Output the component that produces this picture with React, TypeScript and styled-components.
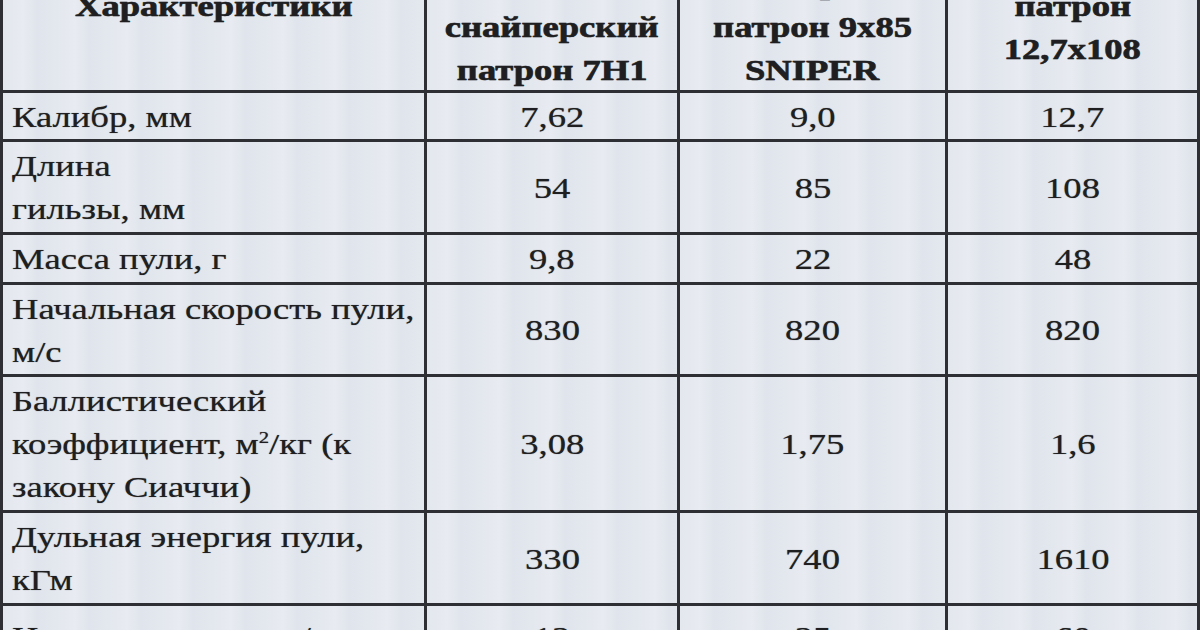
import React from 'react';
import styled, {createGlobalStyle} from "styled-components";

const GlobalStyle = createGlobalStyle`
  html, body {
    margin: 0;
    padding: 0;
    background: #e4e8ef;
    overflow: hidden;
  }
  body {
    width: 1200px;
    height: 630px;
    font-family: "Liberation Serif", "Times New Roman", serif;
    color: #1f1f22;
  }
`

type Row = {
    label: React.ReactNode[];
    values: string[];
}

const header: string[][] = [
    ["Характеристики"],
    ["Винтовочный", "отечественный", "снайперский", "патрон 7Н1"],
    ["Винтовочный", "снайперский", "патрон 9х85", "SNIPER"],
    ["Крупнокалиберный", "патрон", "12,7х108"],
];

const rows: Row[] = [
    {label: ["Калибр, мм"], values: ["7,62", "9,0", "12,7"]},
    {label: ["Длина", "гильзы, мм"], values: ["54", "85", "108"]},
    {label: ["Масса пули, г"], values: ["9,8", "22", "48"]},
    {label: ["Начальная скорость пули,", "м/с"], values: ["830", "820", "820"]},
    {
        label: ["Баллистический", <>коэффициент, м<sup>2</sup>/кг (к</>, "закону Сиаччи)"],
        values: ["3,08", "1,75", "1,6"]
    },
    {label: ["Дульная энергия пули,", "кГм"], values: ["330", "740", "1610"]},
    {label: ["Импульс отдачи, н/с"], values: ["12", "25", "60"]},
];

export default function App() {
    return (
        <>
            <GlobalStyle/>
            <Page>
                <Table>
                    {header.map((lines, i) => (
                        <HeadCell key={"h" + i}>
                            {lines.map((line, j) => (
                                <Line key={j} $origin="center">{line}</Line>
                            ))}
                        </HeadCell>
                    ))}
                    {rows.map((row, i) => (
                        <React.Fragment key={i}>
                            <LabelCell>
                                {row.label.map((line, j) => (
                                    <Line key={j} $origin="left">{line}</Line>
                                ))}
                            </LabelCell>
                            {row.values.map((v, j) => (
                                <ValueCell key={j}>
                                    <Line $origin="center">{v}</Line>
                                </ValueCell>
                            ))}
                        </React.Fragment>
                    ))}
                </Table>
            </Page>
        </>
    )
}

const Page = styled.div`
  width: 1200px;
  height: 630px;
  overflow: hidden;
`

// the scan is cut at the top, so the header row starts above the page
const Table = styled.div`
  margin-top: -83px;
  display: grid;
  grid-template-columns: 421px 250px 265px 249px;
  grid-template-rows: 170px 46px 90px 47px 89px 133px 90px 60px;
  gap: 3px;
  padding: 3px;
  width: 1200px;
  box-sizing: border-box;
  background: #2e2f34;
`

const Cell = styled.div`
  display: flex;
  flex-direction: column;
  justify-content: center;
  background-color: #e3e7ee;
  background-image: repeating-linear-gradient(
    90deg,
    rgba(255, 255, 255, 0) 0px,
    rgba(255, 255, 255, 0.18) 20px,
    rgba(205, 212, 225, 0.14) 34px,
    rgba(255, 255, 255, 0) 52px
  );
  font-size: 30px;
  line-height: 43px;
  overflow: hidden;
`

const HeadCell = styled(Cell)`
  align-items: center;
  font-weight: 700;
  text-align: center;
  -webkit-text-stroke: 0.5px #1f1f22;
`

const LabelCell = styled(Cell)`
  align-items: flex-start;
  padding-left: 9px;
`

const ValueCell = styled(Cell)`
  align-items: center;
`

const Line = styled.span<{ $origin: string }>`
  display: block;
  white-space: nowrap;
  transform: scaleX(1.22);
  transform-origin: ${p => p.$origin} center;
  text-shadow: 0 0 0.8px rgba(31, 31, 34, 0.7);

  sup {
    font-size: 17px;
    line-height: 0;
    vertical-align: 11px;
  }
`
